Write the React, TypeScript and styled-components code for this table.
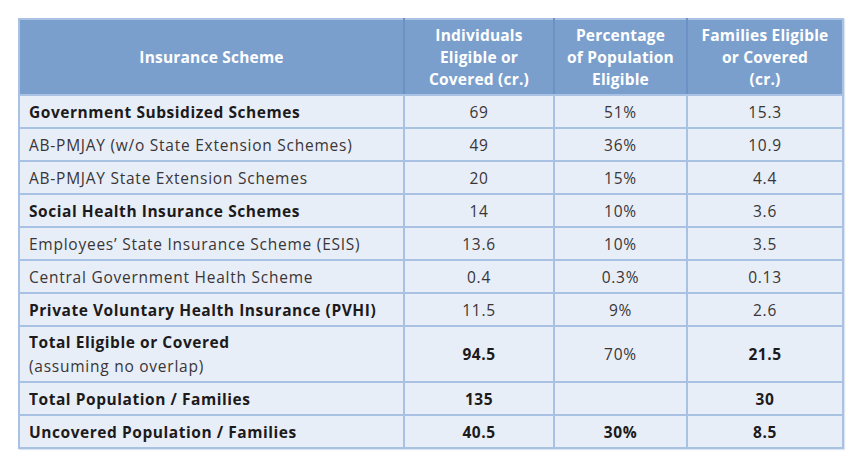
import { createGlobalStyle } from 'styled-components';
import styled from 'styled-components';

const GlobalStyle = createGlobalStyle`
  html, body {
    margin: 0;
    padding: 0;
    background: #ffffff;
  }
  body {
    font-family: "Open Sans", "Noto Sans", sans-serif;
    color: #231f20;
  }
`;

type Row = {
  scheme: string;
  note?: string;
  individuals: string;
  percent: string;
  families: string;
  boldLabel?: boolean;
  boldIndividuals?: boolean;
  boldPercent?: boolean;
  boldFamilies?: boolean;
  tall?: boolean;
};

const rows: Row[] = [
  { scheme: 'Government Subsidized Schemes', individuals: '69', percent: '51%', families: '15.3', boldLabel: true },
  { scheme: 'AB-PMJAY (w/o State Extension Schemes)', individuals: '49', percent: '36%', families: '10.9' },
  { scheme: 'AB-PMJAY State Extension Schemes', individuals: '20', percent: '15%', families: '4.4' },
  { scheme: 'Social Health Insurance Schemes', individuals: '14', percent: '10%', families: '3.6', boldLabel: true },
  { scheme: 'Employees\u2019 State Insurance Scheme (ESIS)', individuals: '13.6', percent: '10%', families: '3.5' },
  { scheme: 'Central Government Health Scheme', individuals: '0.4', percent: '0.3%', families: '0.13' },
  { scheme: 'Private Voluntary Health Insurance (PVHI)', individuals: '11.5', percent: '9%', families: '2.6', boldLabel: true },
  {
    scheme: 'Total Eligible or Covered',
    note: '(assuming no overlap)',
    individuals: '94.5',
    percent: '70%',
    families: '21.5',
    boldLabel: true,
    boldIndividuals: true,
    boldFamilies: true,
    tall: true,
  },
  { scheme: 'Total Population / Families', individuals: '135', percent: '', families: '30', boldLabel: true, boldIndividuals: true, boldFamilies: true },
  {
    scheme: 'Uncovered Population / Families',
    individuals: '40.5',
    percent: '30%',
    families: '8.5',
    boldLabel: true,
    boldIndividuals: true,
    boldPercent: true,
    boldFamilies: true,
  },
];

const Page = styled.div`
  padding: 18px 19px 15px 18px;
`;

const Table = styled.table`
  width: 824px;
  border-collapse: collapse;
  table-layout: fixed;
  border: 2px solid #a9c2e3;
  box-shadow: 1px 1px 1px rgba(120, 150, 200, 0.25);
`;

const HeadCell = styled.th`
  background: #7b9fcd;
  color: #ffffff;
  font-weight: 700;
  font-size: 15.5px;
  letter-spacing: 0.2px;
  line-height: 22px;
  text-align: center;
  padding: 0 4px;
  height: 74px;
  border-right: 2px solid #6b91c5;
  border-bottom: 2px solid #a9c2e3;
  &:last-child {
    border-right: none;
  }
`;

const Cell = styled.td<{ $bold?: boolean; $tall?: boolean; $left?: boolean }>`
  background: #e7eef8;
  font-size: 15.5px;
  font-weight: ${(p) => (p.$bold ? 700 : 400)};
  letter-spacing: ${(p) => (p.$bold ? '0.55px' : '0.75px')};
  color: ${(p) => (p.$bold ? '#1d1a1b' : '#3a3536')};
  text-align: ${(p) => (p.$left ? 'left' : 'center')};
  padding: ${(p) => (p.$left ? '0 0 0 9px' : '0')};
  height: ${(p) => (p.$tall ? '54px' : '31px')};
  border: 2px solid #a9c2e3;
  line-height: 22px;
`;

const Note = styled.div`
  font-weight: 400;
  letter-spacing: 0.75px;
  color: #3a3536;
  font-size: 15.5px;
  margin-top: 2px;
`;

export default function App() {
  return (
    <Page>
      <GlobalStyle />
      <Table>
        <colgroup>
          <col style={{ width: 385 }} />
          <col style={{ width: 150 }} />
          <col style={{ width: 133 }} />
          <col style={{ width: 156 }} />
        </colgroup>
        <thead>
          <tr>
            <HeadCell>Insurance Scheme</HeadCell>
            <HeadCell>
              Individuals
              <br />
              Eligible or
              <br />
              Covered (cr.)
            </HeadCell>
            <HeadCell>
              Percentage
              <br />
              of Population
              <br />
              Eligible
            </HeadCell>
            <HeadCell>
              Families Eligible
              <br />
              or Covered
              <br />
              (cr.)
            </HeadCell>
          </tr>
        </thead>
        <tbody>
          {rows.map((r) => (
            <tr key={r.scheme}>
              <Cell $left $bold={r.boldLabel} $tall={r.tall}>
                {r.scheme}
                {r.note && <Note>{r.note}</Note>}
              </Cell>
              <Cell $bold={r.boldIndividuals} $tall={r.tall}>{r.individuals}</Cell>
              <Cell $bold={r.boldPercent} $tall={r.tall}>{r.percent}</Cell>
              <Cell $bold={r.boldFamilies} $tall={r.tall}>{r.families}</Cell>
            </tr>
          ))}
        </tbody>
      </Table>
    </Page>
  );
}
